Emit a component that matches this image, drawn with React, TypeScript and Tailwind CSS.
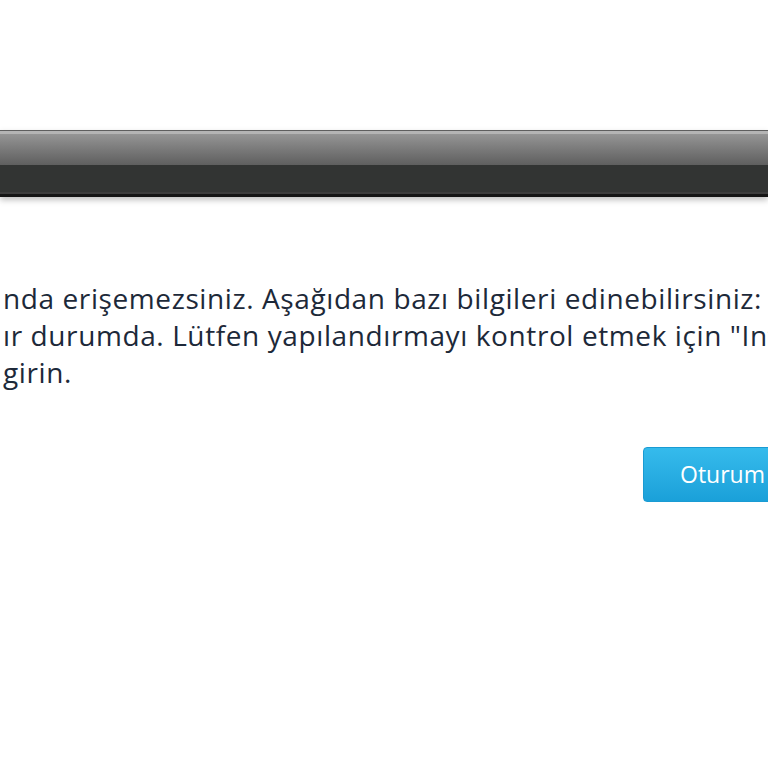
import React from 'react';

// Cropped view of an "access denied" style page: header bar, message, sign-in button.

const lines = [
  'nda erişemezsiniz. Aşağıdan bazı bilgileri edinebilirsiniz:',
  'ır durumda. Lütfen yapılandırmayı kontrol etmek için "Internet',
  'girin.',
];

export default function App(): React.ReactElement {
  return (
    <div className="h-[768px] w-[768px] overflow-hidden bg-white font-['Open_Sans',sans-serif]">
      {/* Header bar */}
      <div className="mt-[130px] shadow-[0_3px_6px_rgba(0,0,0,0.25)]">
        <div className="h-px bg-[#5e5e5e]" />
        <div className="h-[3px] bg-[#b4b4b4]" />
        <div className="h-[31px] bg-gradient-to-b from-[#959595] to-[#5f5f5f]" />
        <div className="h-[27px] bg-[#323433]" />
        <div className="h-[2px] bg-[#3d3d3d]" />
        <div className="h-[3px] bg-[#151515]" />
      </div>

      {/* Message */}
      <div className="mt-[83px] pl-[3px] text-[28px] leading-[37px] tracking-[0.6px] text-[#1d2939] whitespace-nowrap">
        {lines.map((line) => (
          <p key={line}>{line}</p>
        ))}
      </div>

      {/* Actions */}
      <div className="mt-[56px] flex">
        <button className="ml-[643px] h-[55px] w-[180px] shrink-0 rounded-[4px] border border-[#1a9bd3] bg-gradient-to-b from-[#35bbec] to-[#1aa0d9] pl-[36px] text-left text-[23px] text-white">
          Oturum
        </button>
      </div>
    </div>
  );
}
